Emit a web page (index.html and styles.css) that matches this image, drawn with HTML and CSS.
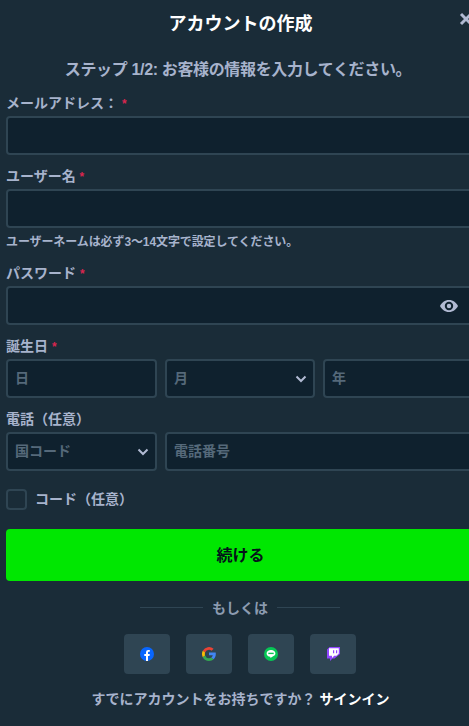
FILE: index.html
```html
<!DOCTYPE html>
<html lang="ja">
<head>
    <meta charset="UTF-8">
    <meta name="viewport" content="width=device-width, initial-scale=1.0">
    <title>アカウントの作成</title>
    <link rel="stylesheet" href="styles.css">
</head>
<body>
    <div class="modal">
        <div class="modal-head">
            <h1>アカウントの作成</h1>
            <button class="close" aria-label="close">
                <svg width="14" height="14" viewBox="0 0 14 14"><path d="M2 2l10 10M12 2L2 12" stroke="#b1bad3" stroke-width="3"/></svg>
            </button>
        </div>
        <p class="step">ステップ 1/2: お客様の情報を入力してください。</p>

        <form class="form">
            <div class="label">メールアドレス： <span class="req">*</span></div>
            <div class="input"></div>

            <div class="label">ユーザー名 <span class="req">*</span></div>
            <div class="input"></div>
            <p class="hint">ユーザーネームは必ず3〜14文字で設定してください。</p>

            <div class="label">パスワード <span class="req">*</span></div>
            <div class="input input-end">
                <svg width="20" height="14" viewBox="0 0 20 14"><path fill="#b1bad3" fill-rule="evenodd" d="M10 1c4.200 0 7.400 2.700 9 6-1.600 3.300-4.800 6-9 6S2.600 10.300 1 7c1.600-3.300 4.800-6 9-6zm0 1.800a4.200 4.200 0 1 0 0 8.400 4.200 4.200 0 0 0 0-8.400zm0 2a2.200 2.200 0 1 1 0 4.400 2.200 2.200 0 0 1 0-4.400z"/></svg>
            </div>

            <div class="label">誕生日 <span class="req">*</span></div>
            <div class="row-three">
                <div class="input">日</div>
                <div class="input input-select">月
                    <svg class="chev" width="12" height="8" viewBox="0 0 12 8"><path d="M1.500 1.500L6 6l4.500-4.500" fill="none" stroke="#b1bad3" stroke-width="2"/></svg>
                </div>
                <div class="input">年</div>
            </div>

            <div class="label">電話（任意）</div>
            <div class="row-phone">
                <div class="input input-select">国コード
                    <svg class="chev" width="12" height="8" viewBox="0 0 12 8"><path d="M1.500 1.500L6 6l4.500-4.500" fill="none" stroke="#b1bad3" stroke-width="2"/></svg>
                </div>
                <div class="input">電話番号</div>
            </div>

            <div class="check-row">
                <span class="checkbox"></span>
                <span class="check-text">コード（任意）</span>
            </div>

            <button type="button" class="submit">続ける</button>
        </form>

        <div class="divider"><span>もしくは</span></div>

        <div class="socials">
            <a class="social">
                <svg width="14" height="14" viewBox="0 0 14 14"><circle cx="7" cy="7" r="7" fill="#0866ff"/><path fill="#fff" d="M6 14V9H4.300V7H6V5.500C6 3.800 7 3 8.400 3c.6 0 1.200.1 1.400.1v1.700H8.900C8.200 4.800 8 5.200 8 5.800V7h1.800l-.3 2H8v5z"/></svg>
            </a>
            <a class="social">
                <svg width="14" height="14" viewBox="0 0 14 14">
                    <path d="M7 2.800c1 0 1.900.4 2.600 1l2-2A7 7 0 0 0 .8 3.800l2.300 1.800A4.200 4.200 0 0 1 7 2.800z" fill="#ea4335"/>
                    <path d="M3.100 8.400a4.200 4.200 0 0 1 0-2.800L.8 3.800a7 7 0 0 0 0 6.400z" fill="#fbbc05"/>
                    <path d="M7 14c1.900 0 3.500-.6 4.600-1.700L9.400 10.600c-.6.400-1.400.6-2.400.6a4.200 4.200 0 0 1-3.900-2.800L.8 10.200A7 7 0 0 0 7 14z" fill="#34a853"/>
                    <path d="M13.800 7c0-.5 0-1-.1-1.400H7v2.700h3.800c-.2.900-.7 1.700-1.400 2.300l2.200 1.700c1.300-1.200 2.200-3 2.200-5.300z" fill="#4285f4"/>
                </svg>
            </a>
            <a class="social">
                <svg width="14" height="14" viewBox="0 0 14 14"><circle cx="7" cy="7" r="7" fill="#06c755"/><path fill="#fff" d="M7 3C4.500 3 2.600 4.500 2.600 6.400c0 1.700 1.500 3.100 3.600 3.300.3.100.2.500.1.900 0 .3.200.3.500.1l3.100-1.900c.9-.6 1.500-1.400 1.500-2.400C11.400 4.500 9.500 3 7 3z"/><path fill="#06c755" d="M4.300 5.700h5.400v1.400H4.300z"/></svg>
            </a>
            <a class="social">
                <svg width="13" height="14" viewBox="0 0 13 14"><path fill="#9146ff" d="M2.500 0L0 2.500v9h3V14l2.500-2.500h2L13 7V0z"/><path fill="#fff" d="M2 1.200h9.800v5.300L9.500 8.800h-2.300L5 11V8.800H2z"/><path fill="#9146ff" d="M6 3.200h1.200v3H6zM9 3.200h1.200v3H9z"/></svg>
            </a>
        </div>

        <p class="signin">すでにアカウントをお持ちですか？ <a>サインイン</a></p>
    </div>
</body>
</html>
```

FILE: styles.css
```css
html, body {
    margin: 0;
    height: 100%;
    overflow: hidden;
}
body {
    background-color: #1a2c38;
    font-family: "Liberation Sans", "Noto Sans CJK JP", sans-serif;
    color: #a7b3cc;
}
.modal {
    width: 469px;
    padding: 0 0 0 6px;
    box-sizing: content-box;
}
.modal-head {
    position: relative;
    width: 469px;
    height: 47px;
    display: flex;
    align-items: center;
    justify-content: center;
}
h1 {
    margin: 0;
    font-size: 18px;
    line-height: 26px;
    font-weight: 700;
    color: #fff;
}
.close {
    position: absolute;
    top: 12px;
    left: 453px;
    padding: 0;
    border: none;
    background: none;
    width: 14px;
    height: 14px;
}
.step {
    width: 464px;
    margin: 11px 0 0;
    height: 23px;
    font-size: 16px;
    line-height: 24px;
    font-weight: 700;
    letter-spacing: -0.35px;
    text-align: center;
    white-space: nowrap;
}
.label {
    margin-top: 12px;
    height: 19px;
    font-size: 14px;
    line-height: 19px;
    font-weight: 700;
    white-space: nowrap;
}
.form .label:first-child {
    margin-top: 13px;
}
.req {
    color: #d9264f;
    font-size: 12px;
}
.input {
    box-sizing: border-box;
    height: 39px;
    margin-top: 3px;
    padding: 0 7px 3px;
    display: flex;
    align-items: center;
    background: #0f212e;
    border: 2px solid #2f4553;
    border-radius: 4px;
    font-size: 14px;
    font-weight: 700;
    color: #55697a;
}
.input-end {
    justify-content: flex-end;
    padding: 0 14px 0 0;
}
.input-select {
    justify-content: space-between;
}
.chev {
    margin: 3px -1px 0 0;
}
.hint {
    margin: 6px 0 0;
    height: 16px;
    padding-bottom: 2px;
    font-size: 12px;
    line-height: 16px;
    font-weight: 700;
    letter-spacing: -0.1px;
    white-space: nowrap;
}
.row-three {
    display: grid;
    grid-template-columns: 151px 150px 152px;
    gap: 8px;
}
.row-phone {
    display: grid;
    grid-template-columns: 151px 310px;
    gap: 8px;
}
.check-row {
    display: flex;
    align-items: center;
    gap: 8px;
    margin-top: 18px;
}
.checkbox {
    box-sizing: border-box;
    width: 21px;
    height: 21px;
    background: #1a2c38;
    border: 2px solid #2f4553;
    border-radius: 4px;
}
.check-text {
    font-size: 14px;
    line-height: 21px;
    font-weight: 700;
}
.submit {
    display: block;
    width: 469px;
    height: 52px;
    margin-top: 19px;
    padding: 0 0 3px;
    border: none;
    border-radius: 4px;
    background: #00e701;
    color: #05121a;
    font-family: inherit;
    font-size: 16px;
    font-weight: 700;
}
.divider {
    display: flex;
    align-items: center;
    justify-content: center;
    gap: 9px;
    width: 200px;
    margin: 16px 0 0 134px;
    height: 20px;
    font-size: 14px;
    font-weight: 700;
    color: #8c9bb0;
}
.divider::before, .divider::after {
    content: "";
    flex: 1;
    height: 1px;
    background: #2f4553;
}
.socials {
    display: flex;
    gap: 16px;
    margin: 17px 0 0 118px;
}
.social {
    width: 46px;
    height: 40px;
    display: flex;
    align-items: center;
    justify-content: center;
    background: #2f4553;
    border-radius: 4px;
}
.signin {
    width: 469px;
    margin: 15px 0 0;
    font-size: 14px;
    line-height: 21px;
    font-weight: 700;
    text-align: center;
}
.signin a {
    color: #fff;
    font-weight: 700;
}
```
